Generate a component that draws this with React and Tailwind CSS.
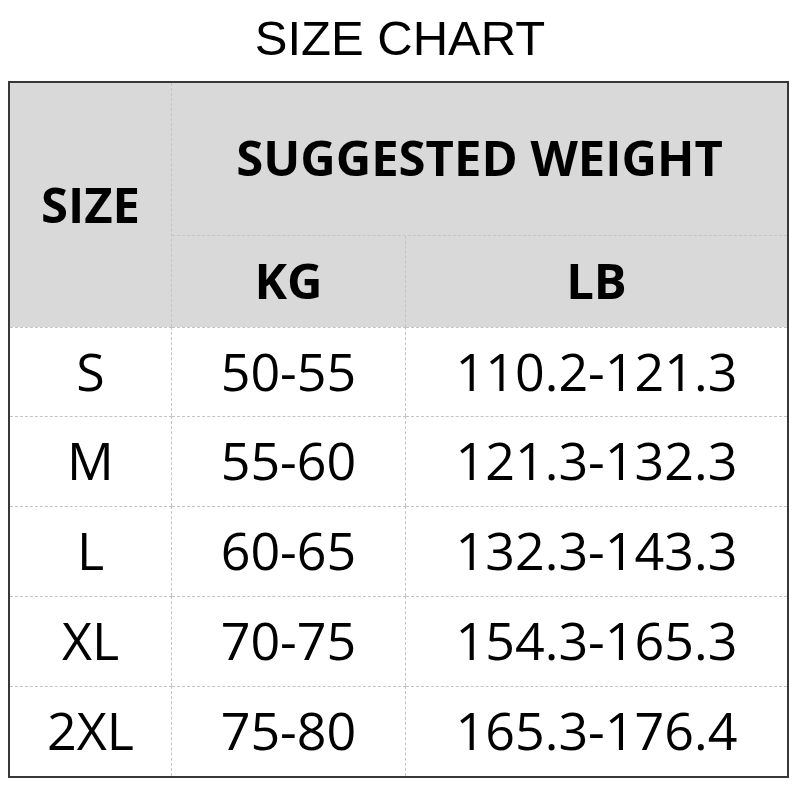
import React from "react";

const rows = [
  ["S", "50-55", "110.2-121.3"],
  ["M", "55-60", "121.3-132.3"],
  ["L", "60-65", "132.3-143.3"],
  ["XL", "70-75", "154.3-165.3"],
  ["2XL", "75-80", "165.3-176.4"],
];

export default function App() {
  return (
    <div className="w-[800px] h-[800px] bg-white relative">
      <div
        className="h-[81px] flex items-center justify-center pb-[4px] text-[49px] leading-[49px] text-black"
        style={{ fontFamily: '"Liberation Sans", Arial, sans-serif' }}
      >
        SIZE CHART
      </div>
      <div
        className="ml-[8px] w-[781px] h-[697px] border-2 border-[#383838] grid grid-cols-[162px_234px_381px] grid-rows-[153px_91px_89px_90px_90px_90px_90px] text-black"
        style={{ fontFamily: '"Open Sans", "Noto Sans", sans-serif' }}
      >
        <div className="row-span-2 bg-[#d9d9d9] border-r border-dashed border-[#c4c4c4] flex items-center justify-center font-bold text-[49px] leading-[49px] pb-[2px]">
          SIZE
        </div>
        <div className="col-span-2 bg-[#d9d9d9] border-b border-dashed border-[#c4c4c4] flex items-center justify-center font-bold text-[49px] leading-[49px] pb-[3px]">
          SUGGESTED WEIGHT
        </div>
        <div className="bg-[#d9d9d9] border-r border-dashed border-[#c4c4c4] flex items-center justify-center font-bold text-[49px] leading-[49px] pb-[3px]">
          KG
        </div>
        <div className="bg-[#d9d9d9] flex items-center justify-center font-bold text-[49px] leading-[49px] pb-[3px]">
          LB
        </div>
        {rows.map((r, i) => (
          <React.Fragment key={i}>
            <div className="border-r border-t border-dashed border-[#c4c4c4] flex items-center justify-center text-[52px] leading-[52px] pb-[3px]">
              {r[0]}
            </div>
            <div className="border-r border-t border-dashed border-[#c4c4c4] flex items-center justify-center text-[52px] leading-[52px] pb-[3px]">
              {r[1]}
            </div>
            <div className="border-t border-dashed border-[#c4c4c4] flex items-center justify-center text-[52px] leading-[52px] pb-[3px]">
              {r[2]}
            </div>
          </React.Fragment>
        ))}
      </div>
    </div>
  );
}
